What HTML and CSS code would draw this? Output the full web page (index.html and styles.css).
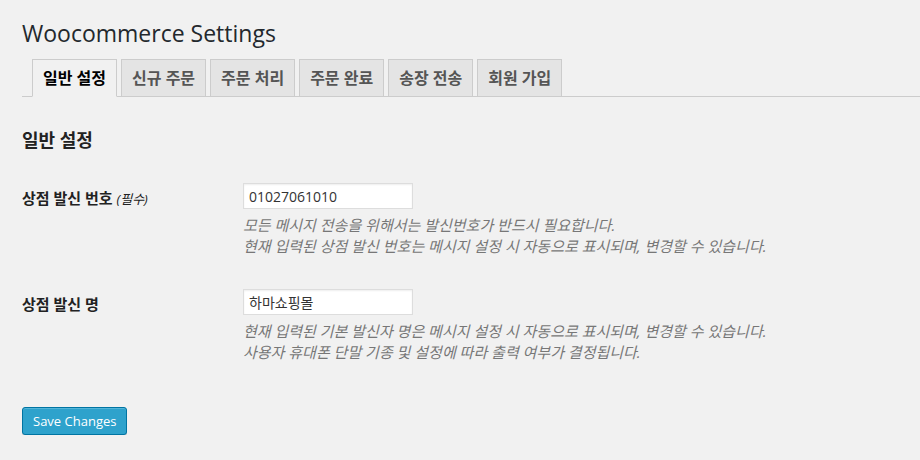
FILE: index.html
```html
<!DOCTYPE html>
<html lang="ko">

<head>
	<meta charset="UTF-8" />
	<meta name="viewport" content="width=device-width, initial-scale=1.0" />
	<title>Woocommerce Settings</title>
	<link rel="stylesheet" href="styles.css">
</head>

<body>
	<div class="wrap">
		<h2 class="title">Woocommerce Settings</h2>

		<div class="tabs">
			<a class="tab active" href="#">일반 설정</a>
			<a class="tab" href="#">신규 주문</a>
			<a class="tab" href="#">주문 처리</a>
			<a class="tab" href="#">주문 완료</a>
			<a class="tab" href="#">송장 전송</a>
			<a class="tab" href="#">회원 가입</a>
		</div>

		<h3 class="section">일반 설정</h3>

		<div class="field">
			<label class="field-label">상점 발신 번호 <em>(필수)</em></label>
			<div class="field-body">
				<input class="text" type="text" value="01027061010">
				<p class="desc">모든 메시지 전송을 위해서는 발신번호가 반드시 필요합니다.<br>현재 입력된 상점 발신 번호는 메시지 설정 시 자동으로 표시되며, 변경할 수 있습니다.</p>
			</div>
		</div>

		<div class="field">
			<label class="field-label">상점 발신 명</label>
			<div class="field-body">
				<input class="text" type="text" value="하마쇼핑몰">
				<p class="desc">현재 입력된 기본 발신자 명은 메시지 설정 시 자동으로 표시되며, 변경할 수 있습니다.<br>사용자 휴대폰 단말 기종 및 설정에 따라 출력 여부가 결정됩니다.</p>
			</div>
		</div>

		<div class="submit">
			<button class="button-primary" type="button">Save Changes</button>
		</div>
	</div>
</body>

</html>
```

FILE: styles.css
```css
html {
	width: 100%;
	height: 100%;
}

body {
	margin: 0;
	background: #f1f1f1;
	color: #444;
	font-family: "Open Sans", "Noto Sans CJK KR", sans-serif;
	font-size: 13px;
}

.wrap {
	padding-left: 22px;
}

.title {
	margin: 0;
	padding-top: 19px;
	font-size: 23px;
	font-weight: 400;
	line-height: 29px;
	color: #23282d;
}

.tabs {
	display: flex;
	margin-top: 11px;
	padding-left: 10px;
	border-bottom: 1px solid #ccc;
}

.tabs .tab {
	margin: 0 4px -1px 0;
	padding: 6px 10px;
	border: 1px solid #ccc;
	background: #e4e4e4;
	color: #555;
	font-size: 16px;
	font-weight: 600;
	line-height: 24px;
	text-decoration: none;
}

.tabs .tab.active {
	background: #f1f1f1;
	border-bottom-color: #f1f1f1;
	color: #000;
}

.section {
	margin: 32px 0 16px;
	font-size: 18px;
	font-weight: 600;
	line-height: 22px;
	color: #222;
}

.field {
	display: grid;
	grid-template-columns: 221px 1fr;
	padding: 16px 0;
}

.field-label {
	padding-top: 4px;
	font-size: 15px;
	font-weight: 600;
	line-height: 22px;
	color: #222;
}

.field-label em {
	font-size: 13px;
	font-weight: 400;
}

.text {
	display: block;
	box-sizing: border-box;
	width: 170px;
	height: 26px;
	margin: 0;
	padding: 3px 5px;
	border: 1px solid #ddd;
	background: #fff;
	box-shadow: inset 0 1px 2px rgba(0, 0, 0, 0.07);
	color: #333;
	font-family: "Open Sans", "Noto Sans CJK KR", sans-serif;
	font-size: 14px;
}

.desc {
	margin: 6px 0 0;
	font-size: 15px;
	font-style: italic;
	line-height: 21px;
	color: #777;
}

.submit {
	padding-top: 28px;
}

.button-primary {
	height: 28px;
	padding: 0 10px 1px;
	border: 1px solid #0074a2;
	border-radius: 3px;
	background: #2ea2cc;
	box-shadow: inset 0 1px 0 rgba(120, 200, 230, 0.5), 0 1px 0 rgba(0, 0, 0, 0.15);
	color: #fff;
	font-family: "Open Sans", sans-serif;
	font-size: 13px;
	line-height: 26px;
	cursor: pointer;
}
```
